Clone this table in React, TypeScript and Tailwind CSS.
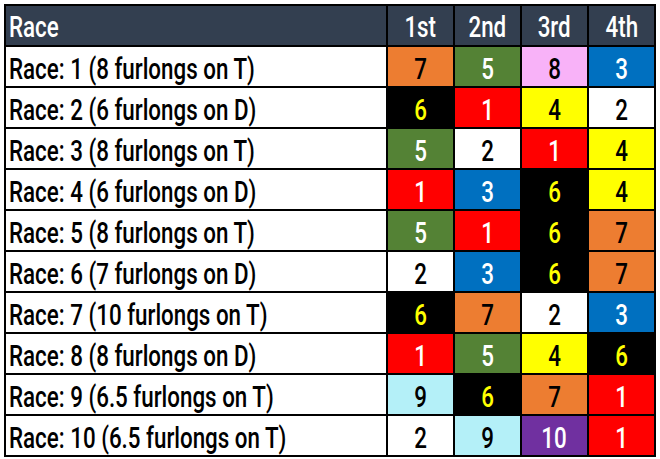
import React from 'react';

// saddle cloth colours by horse number
const cloth: Record<number, string> = {
  1: 'bg-[#ff0000] text-white',
  2: 'bg-white text-black',
  3: 'bg-[#0070c0] text-white',
  4: 'bg-[#ffff00] text-black',
  5: 'bg-[#548235] text-white',
  6: 'bg-black text-[#ffff00]',
  7: 'bg-[#ed7d31] text-black',
  8: 'bg-[#f8b2f8] text-black',
  9: 'bg-[#b4f0f8] text-black',
  10: 'bg-[#7030a0] text-white',
};

const races = [
  { label: 'Race: 1 (8 furlongs on T)', picks: [7, 5, 8, 3] },
  { label: 'Race: 2 (6 furlongs on D)', picks: [6, 1, 4, 2] },
  { label: 'Race: 3 (8 furlongs on T)', picks: [5, 2, 1, 4] },
  { label: 'Race: 4 (6 furlongs on D)', picks: [1, 3, 6, 4] },
  { label: 'Race: 5 (8 furlongs on T)', picks: [5, 1, 6, 7] },
  { label: 'Race: 6 (7 furlongs on D)', picks: [2, 3, 6, 7] },
  { label: 'Race: 7 (10 furlongs on T)', picks: [6, 7, 2, 3] },
  { label: 'Race: 8 (8 furlongs on D)', picks: [1, 5, 4, 6] },
  { label: 'Race: 9 (6.5 furlongs on T)', picks: [9, 6, 7, 1] },
  { label: 'Race: 10 (6.5 furlongs on T)', picks: [2, 9, 10, 1] },
];

const headers = ['1st', '2nd', '3rd', '4th'];

// condensed look: squeeze a regular face horizontally
const Narrow: React.FC<{ children: React.ReactNode; left?: boolean }> = ({ children, left }) => (
  <span className={`inline-block whitespace-nowrap scale-x-[0.745] ${left ? 'origin-left' : 'origin-center'}`}>
    {children}
  </span>
);

const App: React.FC = () => {
  return (
    <div className="w-[660px] h-[459px] bg-white pt-[4px] pl-[4px] font-['Roboto',sans-serif] font-medium">
      <div className="grid grid-cols-[380px_65px_65px_65px_65px] auto-rows-[39px] gap-[2px] p-[2px] bg-black w-fit">
        {/* Header */}
        <div className="bg-[#333f50] text-white text-[30px] leading-none flex items-center pl-[3px] pt-[3px] overflow-hidden">
          <Narrow left>Race</Narrow>
        </div>
        {headers.map((h) => (
          <div key={h} className="bg-[#333f50] text-white text-[30px] leading-none flex items-center justify-center pt-[3px]">
            <Narrow>{h}</Narrow>
          </div>
        ))}

        {races.map((r) => (
          <React.Fragment key={r.label}>
            <div className="bg-white text-black text-[30px] leading-none flex items-center pl-[3px] pt-[4px] overflow-hidden">
              <Narrow left>{r.label}</Narrow>
            </div>
            {r.picks.map((n, i) => (
              <div
                key={i}
                className={`${cloth[n]} text-[30px] leading-none flex items-center justify-center pt-[4px]`}
              >
                <Narrow>{n}</Narrow>
              </div>
            ))}
          </React.Fragment>
        ))}
      </div>
    </div>
  );
};

export default App;
